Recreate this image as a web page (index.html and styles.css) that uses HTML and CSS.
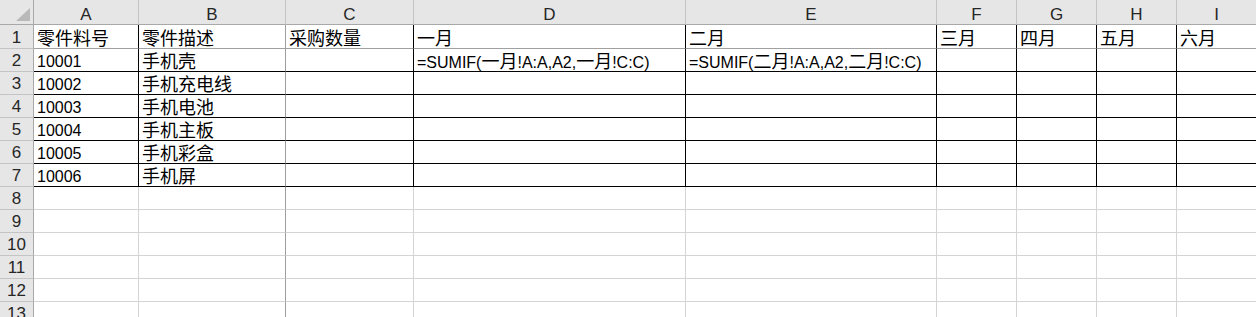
FILE: index.html
```html
<!DOCTYPE html>
<html lang="zh-CN">
<head>
    <meta charset="UTF-8">
    <title>采购汇总</title>
    <link rel="stylesheet" href="styles.css">
</head>
<body>
    <div class="sheet">
        <!-- column letters -->
        <div class="row head">
            <div class="corner">
                <svg width="34" height="24" viewBox="0 0 34 24"><polygon points="30,8 30,21 16,21" fill="#b9b9b9"/></svg>
            </div>
            <div class="col">A</div>
            <div class="col">B</div>
            <div class="col">C</div>
            <div class="col">D</div>
            <div class="col">E</div>
            <div class="col">F</div>
            <div class="col">G</div>
            <div class="col">H</div>
            <div class="col">I</div>
        </div>

        <!-- title row -->
        <div class="row first framed">
            <div class="num">1</div>
            <div class="cell zh">零件料号</div>
            <div class="cell zh">零件描述</div>
            <div class="cell zh">采购数量</div>
            <div class="cell zh">一月</div>
            <div class="cell zh">二月</div>
            <div class="cell zh">三月</div>
            <div class="cell zh">四月</div>
            <div class="cell zh">五月</div>
            <div class="cell zh">六月</div>
        </div>

        <div class="row framed closed">
            <div class="num">2</div>
            <div class="cell">10001</div>
            <div class="cell zh">手机壳</div>
            <div class="cell"></div>
            <div class="cell">=SUMIF(<span class="zh">一月</span>!A:A,A2,<span class="zh">一月</span>!C:C)</div>
            <div class="cell">=SUMIF(<span class="zh">二月</span>!A:A,A2,<span class="zh">二月</span>!C:C)</div>
            <div class="cell"></div>
            <div class="cell"></div>
            <div class="cell"></div>
            <div class="cell"></div>
        </div>
        <div class="row framed closed">
            <div class="num">3</div>
            <div class="cell">10002</div>
            <div class="cell zh">手机充电线</div>
            <div class="cell"></div><div class="cell"></div><div class="cell"></div>
            <div class="cell"></div><div class="cell"></div><div class="cell"></div><div class="cell"></div>
        </div>
        <div class="row framed closed">
            <div class="num">4</div>
            <div class="cell">10003</div>
            <div class="cell zh">手机电池</div>
            <div class="cell"></div><div class="cell"></div><div class="cell"></div>
            <div class="cell"></div><div class="cell"></div><div class="cell"></div><div class="cell"></div>
        </div>
        <div class="row framed closed">
            <div class="num">5</div>
            <div class="cell">10004</div>
            <div class="cell zh">手机主板</div>
            <div class="cell"></div><div class="cell"></div><div class="cell"></div>
            <div class="cell"></div><div class="cell"></div><div class="cell"></div><div class="cell"></div>
        </div>
        <div class="row framed closed">
            <div class="num">6</div>
            <div class="cell">10005</div>
            <div class="cell zh">手机彩盒</div>
            <div class="cell"></div><div class="cell"></div><div class="cell"></div>
            <div class="cell"></div><div class="cell"></div><div class="cell"></div><div class="cell"></div>
        </div>
        <div class="row framed closed">
            <div class="num">7</div>
            <div class="cell">10006</div>
            <div class="cell zh">手机屏</div>
            <div class="cell"></div><div class="cell"></div><div class="cell"></div>
            <div class="cell"></div><div class="cell"></div><div class="cell"></div><div class="cell"></div>
        </div>

        <!-- empty rows -->
        <div class="row"><div class="num">8</div><div class="cell"></div><div class="cell"></div><div class="cell"></div><div class="cell"></div><div class="cell"></div><div class="cell"></div><div class="cell"></div><div class="cell"></div><div class="cell"></div></div>
        <div class="row"><div class="num">9</div><div class="cell"></div><div class="cell"></div><div class="cell"></div><div class="cell"></div><div class="cell"></div><div class="cell"></div><div class="cell"></div><div class="cell"></div><div class="cell"></div></div>
        <div class="row"><div class="num">10</div><div class="cell"></div><div class="cell"></div><div class="cell"></div><div class="cell"></div><div class="cell"></div><div class="cell"></div><div class="cell"></div><div class="cell"></div><div class="cell"></div></div>
        <div class="row"><div class="num">11</div><div class="cell"></div><div class="cell"></div><div class="cell"></div><div class="cell"></div><div class="cell"></div><div class="cell"></div><div class="cell"></div><div class="cell"></div><div class="cell"></div></div>
        <div class="row"><div class="num">12</div><div class="cell"></div><div class="cell"></div><div class="cell"></div><div class="cell"></div><div class="cell"></div><div class="cell"></div><div class="cell"></div><div class="cell"></div><div class="cell"></div></div>
        <div class="row"><div class="num">13</div><div class="cell"></div><div class="cell"></div><div class="cell"></div><div class="cell"></div><div class="cell"></div><div class="cell"></div><div class="cell"></div><div class="cell"></div><div class="cell"></div></div>
    </div>
</body>
</html>
```

FILE: styles.css
```css
/* General styling */
body {
    margin: 0;
    padding: 0;
    background-color: #fff;
    font-family: "Liberation Sans", "Noto Sans CJK SC", sans-serif;
    font-size: 16px;
    color: #000;
    overflow: hidden;
}
.sheet {
    width: 1257px;
}
.row {
    display: grid;
    grid-template-columns: 34px 105px 147px 128px 272px 251px 80px 80px 80px 80px;
    height: 23px;
}
.row.head {
    height: 25px;
}
.row.first {
    height: 24px;
}
.row > div {
    box-sizing: border-box;
    white-space: nowrap;
    overflow: hidden;
}

/* Headers */
.corner,
.col,
.num {
    background-color: #e6e6e6;
    color: #262626;
    font-size: 17px;
    text-align: center;
}
.corner {
    border-right: 1px solid #a8a8a8;
    border-bottom: 1px solid #a8a8a8;
}
.corner svg {
    display: block;
}
.col {
    border-right: 1px solid #c4c4c4;
    border-bottom: 1px solid #a8a8a8;
    line-height: 20px;
    padding-top: 5px;
}
.num {
    border-right: 1px solid #a8a8a8;
    border-bottom: 1px solid #c4c4c4;
    line-height: 20px;
    padding-top: 2px;
}
.first .num {
    padding-top: 3px;
}

/* Cells */
.cell {
    border-right: 1px solid #d4d4d4;
    border-bottom: 1px solid #d4d4d4;
    line-height: 20px;
    padding: 3px 3px 0;
}
.first .cell {
    padding-top: 4px;
    border-bottom-color: #a0a0a0;
}
.zh {
    font-size: 18px;
}
.framed .cell {
    border-right-color: #000;
}
.closed .cell {
    border-bottom-color: #000;
}
/* column B keeps its grey edge all the way down */
.row .cell:nth-child(3) {
    border-right-color: #9e9e9e;
}
```
